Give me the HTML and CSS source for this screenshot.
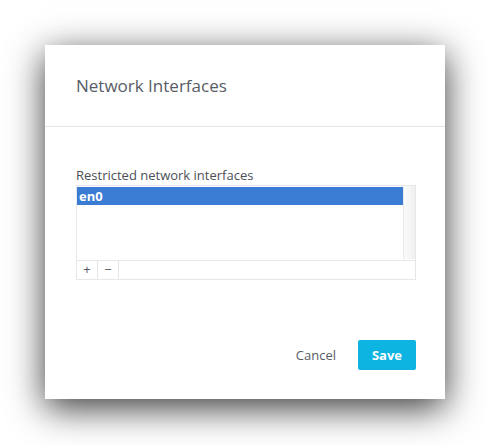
FILE: index.html
```html
<!DOCTYPE html>
<html>
<head>
<meta charset="utf-8">
<link rel="stylesheet" href="styles.css">
</head>
<body>
<div class="dialog">
  <div class="header"><h1 class="title">Network Interfaces</h1></div>
  <div class="content">
    <div class="label">Restricted network interfaces</div>
    <div class="listbox">
      <div class="list-area">
        <div class="rows">
          <div class="row selected">en0</div>
        </div>
        <div class="scrolltrack"></div>
      </div>
      <div class="toolbar">
        <div class="tool">+</div>
        <div class="tool">&minus;</div>
      </div>
    </div>
  </div>
  <div class="actions">
    <button class="btn-cancel">Cancel</button>
    <button class="btn-save">Save</button>
  </div>
</div>
</body>
</html>
```
FILE: styles.css
```css
html, body {
  margin: 0;
  padding: 0;
  background: #ffffff;
}
body {
  width: 490px;
  height: 445px;
  display: flex;
  align-items: center;
  justify-content: center;
  font-family: "Open Sans", "Lato", sans-serif;
}
.dialog {
  width: 400px;
  height: 354px;
  background: #ffffff;
  box-shadow: 0 9px 34px rgba(0, 0, 0, 0.78);
  display: flex;
  flex-direction: column;
  margin-top: -1px;
}
.header {
  height: 82px;
  border-bottom: 1px solid #e6e6e6;
  padding-left: 31px;
  display: flex;
  align-items: center;
  box-sizing: border-box;
}
.title {
  margin: 0;
  font-size: 17px;
  font-weight: 400;
  color: #575c66;
}
.content {
  padding: 40px 29px 0 31px;
}
.label {
  font-size: 13px;
  color: #4b4f57;
  line-height: 16px;
  margin-bottom: 2px;
}
.listbox {
  border: 1px solid #e7e7e7;
  height: 95px;
  box-sizing: border-box;
  display: flex;
  flex-direction: column;
}
.list-area {
  flex: 1;
  display: flex;
}
.rows {
  flex: 1;
  padding-top: 1px;
}
.row {
  height: 18px;
  line-height: 18px;
  font-size: 13px;
  padding-left: 2px;
}
.row.selected {
  background: #3a7bd4;
  color: #ffffff;
  font-weight: 700;
}
.scrolltrack {
  width: 11px;
  border-left: 1px solid #e9e9e9;
  background: linear-gradient(to right, #fafafa, #f0f0f0);
  margin-bottom: 1px;
}
.toolbar {
  height: 18px;
  border-top: 1px solid #e7e7e7;
  display: flex;
}
.tool {
  width: 20px;
  height: 18px;
  border-right: 1px solid #e7e7e7;
  font-size: 13px;
  line-height: 17px;
  text-align: center;
  color: #555a62;
}
.actions {
  margin-top: auto;
  height: 90px;
  display: flex;
  justify-content: flex-end;
  align-items: flex-start;
  padding: 31px 29px 0 0;
  box-sizing: border-box;
  gap: 22px;
}
.btn-cancel {
  border: none;
  background: none;
  padding: 0;
  height: 30px;
  font-family: inherit;
  font-size: 13px;
  color: #575c66;
}
.btn-save {
  border: none;
  width: 58px;
  height: 30px;
  border-radius: 2px;
  background: #0db4e1;
  color: #ffffff;
  font-family: inherit;
  font-size: 13px;
  font-weight: 700;
  padding: 0;
}
```
